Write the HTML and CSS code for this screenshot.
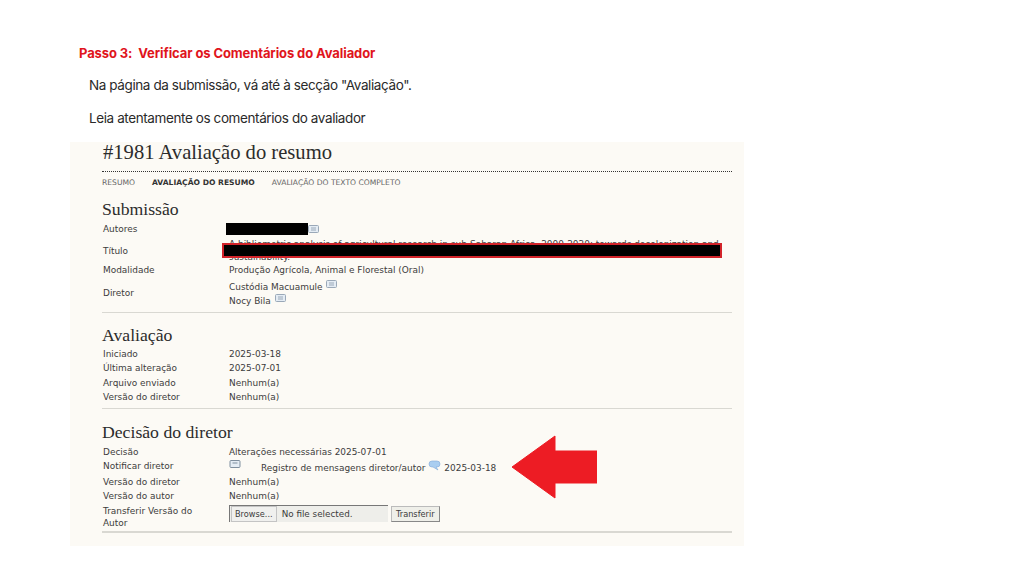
FILE: index.html
```html
<!DOCTYPE html>
<html lang="pt">

<head>
    <meta charset="UTF-8" />
    <title>Passo 3</title>
    <link rel="stylesheet" href="styles.css">
</head>

<body>
    <div class="slide">
        <h2 class="passo">Passo 3:&nbsp; Verificar os Comentários do Avaliador</h2>
        <p class="texto primeiro">Na página da submissão, vá até à secção "Avaliação".</p>
        <p class="texto">Leia atentamente os comentários do avaliador</p>

        <div class="captura">
            <h1>#1981 Avaliação do resumo</h1>
            <div class="abas">
                <span>RESUMO</span>
                <span class="ativa">AVALIAÇÃO DO RESUMO</span>
                <span>AVALIAÇÃO DO TEXTO COMPLETO</span>
            </div>

            <h3 class="h-submissao">Submissão</h3>
            <div class="linhas">
                <div class="rot l-autores">Autores</div>
                <div class="val l-autores"><span class="tarja"></span><svg class="env" viewBox="0 0 11 8"><rect x="0.5" y="0.5" width="10" height="7" rx="1" fill="#e4ecf4" stroke="#9aa8b8"/><path d="M3 3h5M3 5h5" stroke="#9aa8b8"/></svg></div>
                <div class="rot l-titulo">Título</div>
                <div class="val l-titulo titulo">A bibliometric analysis of agricultural research in sub-Saharan Africa, 2000-2020: towards decolonization and sustainability.</div>
                <div class="rot l-modal">Modalidade</div>
                <div class="val l-modal">Produção Agrícola, Animal e Florestal (Oral)</div>
                <div class="rot l-diretor">Diretor</div>
                <div class="val l-diretor">
                    <div class="nome">Custódia Macuamule <svg class="env env-up" viewBox="0 0 11 8"><rect x="0.5" y="0.5" width="10" height="7" rx="1" fill="#e4ecf4" stroke="#9aa8b8"/><path d="M3 3h5M3 5h5" stroke="#9aa8b8"/></svg></div>
                    <div class="nome">Nocy Bila <svg class="env env-up" viewBox="0 0 11 8"><rect x="0.5" y="0.5" width="10" height="7" rx="1" fill="#e4ecf4" stroke="#9aa8b8"/><path d="M3 3h5M3 5h5" stroke="#9aa8b8"/></svg></div>
                </div>
            </div>
            <div class="separador s1"></div>

            <h3 class="h-avaliacao">Avaliação</h3>
            <div class="linhas compacta">
                <div class="rot">Iniciado</div><div class="val">2025-03-18</div>
                <div class="rot">Última alteração</div><div class="val">2025-07-01</div>
                <div class="rot">Arquivo enviado</div><div class="val">Nenhum(a)</div>
                <div class="rot">Versão do diretor</div><div class="val">Nenhum(a)</div>
            </div>
            <div class="separador s2"></div>

            <h3 class="h-decisao">Decisão do diretor</h3>
            <div class="linhas decisao">
                <div class="rot">Decisão</div><div class="val">Alterações necessárias 2025-07-01</div>
                <div class="rot notificar">Notificar diretor</div>
                <div class="val notificar">
                    <svg class="env env-n" viewBox="0 0 11 8"><rect x="0.5" y="0.5" width="10" height="7" rx="1" fill="#e4ecf4" stroke="#7f8f9f"/><path d="M3 3h5" stroke="#7f8f9f"/></svg>
                    <span class="registro">Registro de mensagens diretor/autor</span>
                    <svg class="balao" viewBox="0 0 13 11"><path d="M1 4Q1 1 4 1H9Q12 1 12 4T9 7H8L10 10 5 7H4Q1 7 1 4Z" fill="#a9cdf0" stroke="#7fa8d8" stroke-width="0.6"/></svg>
                    <span>2025-03-18</span>
                </div>
                <div class="rot">Versão do diretor</div><div class="val">Nenhum(a)</div>
                <div class="rot">Versão do autor</div><div class="val">Nenhum(a)</div>
                <div class="rot transf">Transferir Versão do Autor</div>
                <div class="val arquivo">
                    <div class="campo"><span class="browse">Browse...</span><span>No file selected.</span></div>
                    <span class="botao">Transferir</span>
                </div>
            </div>
            <div class="separador s3"></div>

            <!-- tarja e caixa vermelha por cima do titulo -->
            <div class="caixa"></div>
            <svg class="seta" viewBox="0 0 85 64"><path d="M0 32 43 1V16H85V48H43V63Z" fill="#ed1c24" stroke="#ed1c24" stroke-linejoin="round"/></svg>
        </div>
    </div>
</body>

</html>
```

FILE: styles.css
```css
html,
body {
    margin: 0;
    padding: 0;
    background: #fff;
}

.slide {
    width: 1024px;
    height: 576px;
    overflow: hidden;
    padding-top: 45px;
    box-sizing: border-box;
    font-family: "Open Sans", sans-serif;
}

.passo {
    margin: 0 0 0 79px;
    font-family: "Inter", sans-serif;
    font-size: 13px;
    line-height: 16px;
    font-weight: 700;
    letter-spacing: -0.1px;
    color: #e0141c;
}

.texto {
    margin: 17px 0 0 89px;
    font-family: "Inter", sans-serif;
    font-size: 13.5px;
    line-height: 16px;
    letter-spacing: -0.4px;
    color: #2a2a2a;
}

.primeiro {
    margin-top: 16px;
}

.captura {
    position: relative;
    width: 674px;
    height: 404px;
    margin: 16px 0 0 70px;
    padding: 0 12px 0 32px;
    box-sizing: border-box;
    background: #fcfaf5;
    color: #3c3c3c;
    font-family: "DejaVu Sans", sans-serif;
    font-size: 8.95px;
}

h1 {
    margin: 0;
    padding: 0 0 8px 1px;
    border-bottom: 1px dotted #333;
    font-family: "Liberation Serif", serif;
    font-weight: 400;
    font-size: 20.6px;
    line-height: 21px;
    height: 21px;
    color: #2c2c2c;
}

.abas {
    display: flex;
    gap: 17px;
    margin-top: 6px;
    font-size: 7.6px;
    line-height: 10px;
    color: #666;
}

.ativa {
    font-weight: 700;
    color: #333;
}

h3 {
    margin: 0;
    font-family: "Liberation Serif", serif;
    font-weight: 400;
    font-size: 17.7px;
    line-height: 20px;
    color: #2c2c2c;
}

.h-submissao {
    margin-top: 11px;
}

.h-avaliacao {
    margin-top: 12px;
}

.h-decisao {
    margin-top: 13px;
}

.linhas {
    display: grid;
    grid-template-columns: 126px 1fr;
    margin-left: 1px;
    line-height: 14px;
}

.rot,
.val {
    display: flex;
    align-items: center;
    min-height: 14px;
}

.val {
    gap: 0;
}

.l-autores {
    height: 16px;
    margin-top: 2px;
}

.tarja {
    display: block;
    width: 82px;
    height: 12px;
    margin-left: -3px;
    background: #000;
}

.env {
    width: 11px;
    height: 8px;
}

.env-up {
    margin-left: 1px;
    vertical-align: 2px;
}

.l-titulo {
    height: 25px;
    margin-top: 1px;
}

.titulo {
    display: block;
    line-height: 13px;
    white-space: normal;
}

.l-modal {
    height: 14px;
    margin-top: 0;
}

.l-diretor {
    height: 26px;
    margin-top: 3px;
}

.val.l-diretor {
    display: block;
}

.nome {
    line-height: 12.7px;
}

.separador {
    height: 1px;
    background: #d9d8d2;
}

.s1 {
    margin-top: 6px;
}

.compacta {
    margin-top: 2px;
    grid-auto-rows: 14.3px;
}

.s2 {
    margin-top: 4px;
}

.decisao {
    margin-top: 3px;
}

.notificar {
    height: 16px;
}

.rot.notificar {
    align-items: flex-start;
}

.val.notificar {
    align-items: flex-end;
    gap: 0;
}

.env-n {
    align-self: flex-start;
    margin-top: 1px;
    margin-right: 20px;
    width: 12px;
}

.balao {
    width: 13px;
    height: 11px;
    margin: 0 3px 4px 3px;
}

.transf {
    line-height: 11.5px;
    margin-top: 3px;
    max-width: 105px;
}

.arquivo {
    align-items: flex-start;
    gap: 3px;
    margin-top: 2px;
}

.campo {
    display: flex;
    align-items: center;
    gap: 5px;
    width: 159px;
    height: 17px;
    background: #eeeeea;
    border-top: 1px solid #777;
    border-left: 1px solid #777;
    box-sizing: border-box;
    font-size: 8.8px;
}

.browse {
    padding: 0 3px;
    margin-left: 1px;
    height: 14px;
    line-height: 14px;
    background: #f0f0ee;
    border: 1px solid #c4c4c4;
    font-size: 8.2px;
}

.botao {
    padding: 0 4px;
    margin-top: 1px;
    height: 14px;
    line-height: 14px;
    background: #efefe9;
    border: 1px solid #bbb;
    border-right-color: #888;
    border-bottom-color: #888;
    font-size: 8.2px;
}

.s3 {
    margin-top: 2px;
    height: 2px;
}

.caixa {
    position: absolute;
    left: 152px;
    top: 101px;
    width: 500px;
    height: 15px;
    box-sizing: border-box;
    background: #000;
    border: 2px solid #d2232a;
}

.seta {
    position: absolute;
    left: 442px;
    top: 293px;
    width: 85px;
    height: 64px;
}
```
